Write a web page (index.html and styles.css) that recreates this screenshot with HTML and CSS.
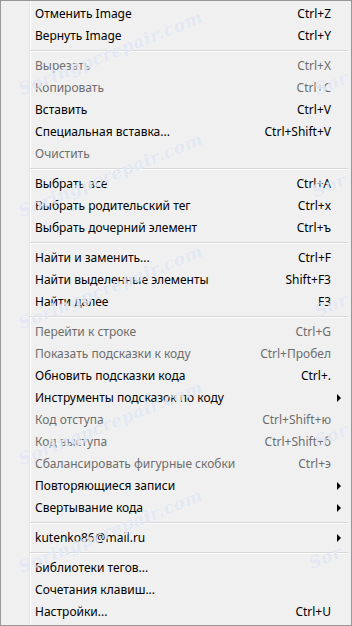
FILE: index.html
```html
<!DOCTYPE html>
<html lang="ru">
<head>
<meta charset="utf-8">
<link rel="stylesheet" href="styles.css">
</head>
<body>
<div class="menu">
  <div class="item"><span class="label">Отменить Image</span><span class="key">Ctrl+Z</span><span class="sub"></span></div>
  <div class="item"><span class="label">Вернуть Image</span><span class="key">Ctrl+Y</span><span class="sub"></span></div>
  <div class="sep"></div>
  <div class="item off"><span class="label">Вырезать</span><span class="key">Ctrl+X</span><span class="sub"></span></div>
  <div class="item off"><span class="label">Копировать</span><span class="key">Ctrl+C</span><span class="sub"></span></div>
  <div class="item"><span class="label">Вставить</span><span class="key">Ctrl+V</span><span class="sub"></span></div>
  <div class="item"><span class="label">Специальная вставка...</span><span class="key">Ctrl+Shift+V</span><span class="sub"></span></div>
  <div class="item off"><span class="label">Очистить</span><span class="key"></span><span class="sub"></span></div>
  <div class="sep"></div>
  <div class="item"><span class="label">Выбрать все</span><span class="key">Ctrl+A</span><span class="sub"></span></div>
  <div class="item"><span class="label">Выбрать родительский тег</span><span class="key">Ctrl+x</span><span class="sub"></span></div>
  <div class="item"><span class="label">Выбрать дочерний элемент</span><span class="key">Ctrl+ъ</span><span class="sub"></span></div>
  <div class="sep"></div>
  <div class="item"><span class="label">Найти и заменить...</span><span class="key">Ctrl+F</span><span class="sub"></span></div>
  <div class="item"><span class="label">Найти выделенные элементы</span><span class="key">Shift+F3</span><span class="sub"></span></div>
  <div class="item"><span class="label">Найти далее</span><span class="key">F3</span><span class="sub"></span></div>
  <div class="sep"></div>
  <div class="item off"><span class="label">Перейти к строке</span><span class="key">Ctrl+G</span><span class="sub"></span></div>
  <div class="item off"><span class="label">Показать подсказки к коду</span><span class="key">Ctrl+Пробел</span><span class="sub"></span></div>
  <div class="item"><span class="label">Обновить подсказки кода</span><span class="key">Ctrl+.</span><span class="sub"></span></div>
  <div class="item"><span class="label">Инструменты подсказок по коду</span><span class="key"></span><span class="sub"><i class="arrow"></i></span></div>
  <div class="item off"><span class="label">Код отступа</span><span class="key">Ctrl+Shift+ю</span><span class="sub"></span></div>
  <div class="item off"><span class="label">Код выступа</span><span class="key">Ctrl+Shift+б</span><span class="sub"></span></div>
  <div class="item off"><span class="label">Сбалансировать фигурные скобки</span><span class="key">Ctrl+э</span><span class="sub"></span></div>
  <div class="item"><span class="label">Повторяющиеся записи</span><span class="key"></span><span class="sub"><i class="arrow"></i></span></div>
  <div class="item"><span class="label">Свертывание кода</span><span class="key"></span><span class="sub"><i class="arrow"></i></span></div>
  <div class="sep"></div>
  <div class="item"><span class="label">kutenko86@mail.ru</span><span class="key"></span><span class="sub"><i class="arrow"></i></span></div>
  <div class="sep"></div>
  <div class="item"><span class="label">Библиотеки тегов...</span><span class="key"></span><span class="sub"></span></div>
  <div class="item"><span class="label">Сочетания клавиш...</span><span class="key"></span><span class="sub"></span></div>
  <div class="item"><span class="label">Настройки...</span><span class="key">Ctrl+U</span><span class="sub"></span></div>

  <div class="marks" aria-hidden="true">
    <span class="wm wm1">Soringpcrepair.com</span>
    <span class="wm wm2">Sor</span>
    <span class="wm wm3">Soringpcrepair.com</span>
    <span class="wm wm4">Sor</span>
    <span class="wm wm5">Soringpcrepair.com</span>
    <span class="wm wm6">Sor</span>
    <span class="wm wm7">Soringpcrepair.com</span>
    <span class="wm wm8">Sor</span>
    <span class="wm wm9">Soringpcrepair.com</span>
    <span class="wm wm10">Sor</span>
  </div>
</div>
</body>
</html>
```
FILE: styles.css
```css
html, body {
  margin: 0;
  padding: 0;
  background: #f0f0f0;
}
.menu {
  position: relative;
  overflow: hidden;
  box-sizing: border-box;
  width: 352px;
  height: 626px;
  border: 1px solid #979797;
  padding: 2px;
  background-color: #f0f0f0;
  background-image: linear-gradient(to right,
    transparent 28px, #e2e3e3 28px, #e2e3e3 29px,
    #ffffff 29px, #ffffff 30px, transparent 30px);
  font-family: "Noto Sans", "Open Sans", sans-serif;
  font-size: 12px;
  color: #000;
}
.item {
  display: flex;
  align-items: center;
  height: 22px;
  line-height: 22px;
  padding-left: 32px;
  white-space: nowrap;
}
.item.off {
  color: #6d6d6d;
}
.label {
  flex: 1;
}
.key {
  text-align: right;
}
.sub {
  width: 18px;
  height: 22px;
  display: flex;
  align-items: center;
}
.arrow {
  display: block;
  margin-left: 6px;
  width: 0;
  height: 0;
  border-top: 4px solid transparent;
  border-bottom: 4px solid transparent;
  border-left: 4px solid #000;
}
.sep {
  height: 8px;
  margin-left: 27px;
  margin-right: 1px;
  box-sizing: border-box;
  padding-top: 3px;
}
.sep::before {
  content: "";
  display: block;
  height: 1px;
  background: #d7d7d7;
  border-bottom: 1px solid #ffffff;
}
.marks {
  position: absolute;
  inset: 0;
  pointer-events: none;
}
.wm {
  position: absolute;
  font-family: "DejaVu Serif", serif;
  font-style: italic;
  font-weight: bold;
  font-size: 17px;
  letter-spacing: 0.5px;
  color: rgba(185, 198, 228, 0.4);
  text-shadow: 0 0 1px rgba(255,255,255,0.9);
  transform: rotate(-22deg);
  transform-origin: left bottom;
  white-space: nowrap;
}
.wm1 { left: 22px; top: 78px; }
.wm2 { left: 318px; top: 78px; }
.wm3 { left: 22px; top: 200px; }
.wm4 { left: 316px; top: 180px; }
.wm5 { left: 22px; top: 312px; }
.wm6 { left: 318px; top: 300px; }
.wm7 { left: 22px; top: 448px; }
.wm8 { left: 318px; top: 430px; }
.wm9 { left: 22px; top: 556px; }
.wm10 { left: 312px; top: 552px; }
```
